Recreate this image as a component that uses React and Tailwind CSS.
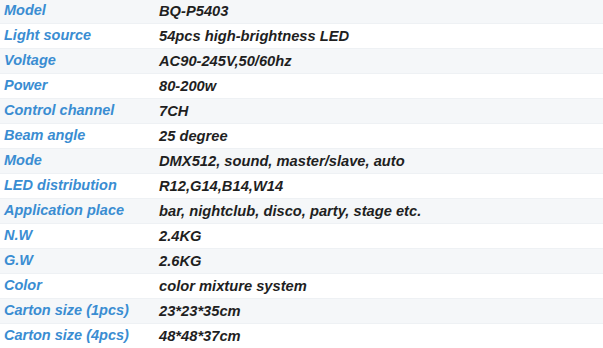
export default function App() {
  const rows = [
    ["Model", "BQ-P5403"],
    ["Light source", "54pcs high-brightness LED"],
    ["Voltage", "AC90-245V,50/60hz"],
    ["Power", "80-200w"],
    ["Control channel", "7CH"],
    ["Beam angle", "25 degree"],
    ["Mode", "DMX512, sound, master/slave, auto"],
    ["LED distribution", "R12,G14,B14,W14"],
    ["Application place", "bar, nightclub, disco, party, stage etc."],
    ["N.W", "2.4KG"],
    ["G.W", "2.6KG"],
    ["Color", "color mixture system"],
    ["Carton size (1pcs)", "23*23*35cm"],
    ["Carton size (4pcs)", "48*48*37cm"],
  ];
  return (
    <div
      className="w-[603px] h-[348px] overflow-hidden bg-white"
      style={{ fontFamily: '"Liberation Sans", Arial, sans-serif' }}
    >
      <div className="-mt-[1px] flex flex-col">
        {rows.map(([k, v], i) => (
          <div
            key={k}
            className={`flex items-center h-[25px] border-b border-[#eef1f4] ${
              i % 2 === 0 ? "bg-[#f5f7f9]" : "bg-white"
            }`}
          >
            <div className="w-[159px] pl-[4px] text-[14.5px] font-bold italic text-[#3a8dd2] whitespace-nowrap">
              {k}
            </div>
            <div className="text-[14.7px] font-bold italic text-[#1f1f1f] whitespace-nowrap">
              {v}
            </div>
          </div>
        ))}
      </div>
    </div>
  );
}
